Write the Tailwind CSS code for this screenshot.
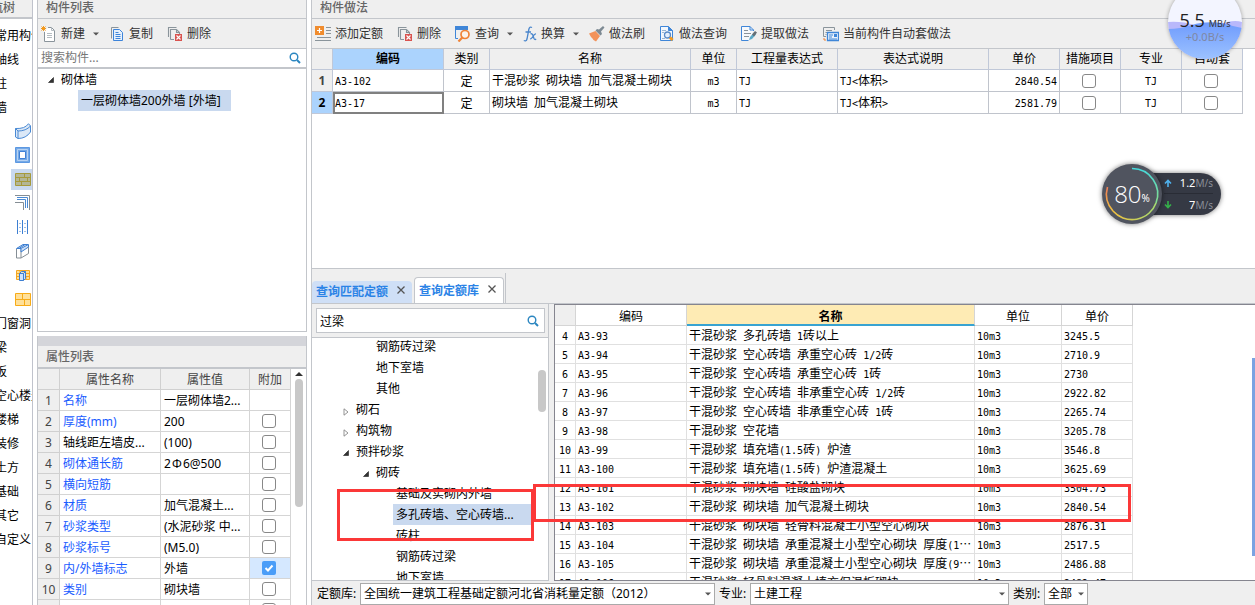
<!DOCTYPE html>
<html lang="zh-CN">
<head>
<meta charset="utf-8">
<title>构件做法</title>
<script src="https://cdn.jsdelivr.net/npm/@tailwindcss/browser@4"></script>
</head>
<body class="relative flex h-screen overflow-hidden bg-white font-['Noto_Sans','Noto_Sans_CJK_SC',sans-serif] text-xs leading-4 text-black">

<!-- shared icons -->
<svg class="hidden">
  <symbol id="search" viewBox="0 0 12 12"><circle cx="5" cy="5" r="3.8" fill="none" stroke="#2b86c0" stroke-width="1.4"/><path d="M8 8l3 3" stroke="#2b86c0" stroke-width="2"/></symbol>
  <symbol id="caret" viewBox="0 0 6 4"><path d="M0 .5h6L3 3.5z" fill="#555"/></symbol>
  <symbol id="open" viewBox="0 0 8 8"><path d="M6.500 1.500v5h-5z" fill="#333" stroke="#222" stroke-width=".6"/></symbol>
  <symbol id="closed" viewBox="0 0 8 8"><path d="M2 .8v6.4L6 4z" fill="#fff" stroke="#888" stroke-width=".9"/></symbol>
  <symbol id="close" viewBox="0 0 8 8"><path d="M.5.5l7 7M7.500.5l-7 7" stroke="#555" stroke-width="1.3"/></symbol>
  <symbol id="delete" viewBox="0 0 16 16"><path d="M1.500 11V1.500H9.500M3.500 13.500V3.500h6l3 3V8M9.500 3.500v3h3M3.500 13.500H7" fill="none" stroke="#8a949b" stroke-width="1.1"/><path d="M8 8h7v7H8z" fill="#d9534f"/><path d="M9.500 9.500l4 4m0-4l-4 4" stroke="#fff" stroke-width="1.1"/></symbol>
</svg>

<nav aria-label="导航树" class="flex w-[33px] shrink-0 flex-col overflow-hidden border-r border-[#c0c3cc] whitespace-nowrap">
  <h2 class="h-[19px] shrink-0 border-b-2 border-[#c3c6cb] bg-[#efefef] text-[#666]"><span class="-ml-[21px] font-medium">导航树</span></h2>
  <ul class="mt-1 flex flex-col *:flex *:h-6 *:shrink-0 *:items-center">
    <li><a href="#" class="-ml-[5px] pt-0.5">常用构件类型</a></li>
    <li><a href="#" class="-ml-[5px] pt-0.5">轴线</a></li>
    <li><a href="#" class="-ml-[5px] pt-0.5">柱</a></li>
    <li><a href="#" class="-ml-[5px] pt-0.5">墙</a></li>
    <li><a href="#" aria-label="弧形墙" class="ml-[11px] flex h-[21px] w-[21px] items-center justify-end pr-px"><svg class="size-4" viewBox="0 0 16 16" fill="#dbe8f7" stroke="#4a8ad4"><path d="M.5 5.500Q10 6 13.500.7L15.500 3v6Q11 15.500 3 15.500L.5 14z"/><path d="M.5 5.500L3 8Q11 8 15.500 3M3 8v7.500" fill="none"/></svg></a></li>
    <li><a href="#" aria-label="洞口" class="ml-[11px] flex h-[21px] w-[21px] items-center justify-end pr-px"><svg class="size-4" viewBox="0 0 16 16"><path d="M.5.5h14v15H.5z" fill="#75a9e6" stroke="#5c98e2"/><path d="M2.500 2.500h10v11h-10z" fill="none" stroke="#b7d2f3"/><path d="M4.500 4.500h6v7h-6z" fill="#fff" stroke="#3f80d6"/></svg></a></li>
    <li><a href="#" aria-label="砌体墙" class="ml-[11px] flex h-[21px] w-[21px] items-center justify-end bg-[#c9d9ef] pr-px"><svg class="size-4" viewBox="0 0 16 16"><path d="M.5 2.500h15v12H.5zM.5 6.500h15M.5 10.500h15M9.500 2.500v4M4.500 6.500v4M12.500 6.500v4M6.500 10.500v4" fill="#b3b696" stroke="#a69a3c"/></svg></a></li>
    <li><a href="#" aria-label="墙角" class="ml-[11px] flex h-[21px] w-[21px] items-center justify-end pr-px"><svg class="size-4" viewBox="0 0 16 16" fill="none"><path d="M0 .5h14.500V15M0 7.500h8.500V15" stroke="#858e95"/><path d="M2 2.500h10.500V13M2 4.500h8.500V13" stroke="#4a8ad4"/></svg></a></li>
    <li><a href="#" aria-label="墙筋" class="ml-[11px] flex h-[21px] w-[21px] items-center justify-end pr-px"><svg class="size-4" viewBox="0 0 16 16" fill="none" stroke="#3d7fd2"><path d="M2.500 1v14M7.500 1v14M12.500 1v14"/><path d="M2 4.500h11M2 8.500h11M2 12.500h11" stroke-dasharray="1 1.500"/></svg></a></li>
    <li><a href="#" aria-label="暗梁" class="ml-[11px] flex h-[21px] w-[21px] items-center justify-end pr-px"><svg class="size-4" viewBox="0 0 16 16"><path d="M1.500 6v9H6V6M6 15l7.500-4.500V2" fill="#fff" stroke="#858e95"/><path d="M1.500 5.500L8 1.500h5.500L6 5.500zM4 5.500l6-4M6 6v3l7.500-5V2" fill="#cfe0f6" stroke="#3d7fd2"/></svg></a></li>
    <li><a href="#" aria-label="幕墙" class="ml-[11px] flex h-[21px] w-[21px] items-center justify-end pr-px"><svg class="size-4" viewBox="0 0 16 16"><path d="M1.500 3.500h13v9h-13zM1.500 6.500h13M1.500 9.500h13M5 3.500v3M11 9.500v3" fill="#ffdf94" stroke="#f5a623"/><path d="M4.500 6.500l2-2h4v7l-2 2h-4zM8.500 6.500v7M4.500 6.500h4l2-2" fill="#cfe3fa" stroke="#3d7fd2"/></svg></a></li>
    <li><a href="#" aria-label="砖墙" class="ml-[11px] flex h-[21px] w-[21px] items-center justify-end pr-px"><svg class="size-4" viewBox="0 0 16 16"><path d="M.5 2.500h15v12H.5zM.5 8.500h15M7.500 2.500v6M9.500 8.500v6" fill="#ffe099" stroke="#f7ab18"/></svg></a></li>
    <li><a href="#" class="-ml-[5px] pt-0.5">门窗洞</a></li>
    <li><a href="#" class="-ml-[5px] pt-0.5">梁</a></li>
    <li><a href="#" class="-ml-[5px] pt-0.5">板</a></li>
    <li><a href="#" class="-ml-[5px] pt-0.5">空心楼盖</a></li>
    <li><a href="#" class="-ml-[5px] pt-0.5">楼梯</a></li>
    <li><a href="#" class="-ml-[5px] pt-0.5">装修</a></li>
    <li><a href="#" class="-ml-[5px] pt-0.5">土方</a></li>
    <li><a href="#" class="-ml-[5px] pt-0.5">基础</a></li>
    <li><a href="#" class="-ml-[5px] pt-0.5">其它</a></li>
    <li><a href="#" class="-ml-[5px] pt-0.5">自定义</a></li>
  </ul>
</nav>

<div class="ml-1 flex w-[270px] shrink-0 flex-col gap-1">
  <section class="flex h-[332px] shrink-0 flex-col border-x border-b border-[#c3c6cb]">
    <h2 class="h-[19px] shrink-0 border-b border-[#c3c6cb] bg-[#efefef] pl-2 font-medium text-[#666]">构件列表</h2>
    <div class="flex h-[30px] shrink-0 items-center gap-3.5 border-b border-[#c3c6cb] bg-[#efefef] px-[3px] text-[#333]">
      <button class="flex items-center gap-1"><svg class="size-4" viewBox="0 0 16 16"><path d="M3.500 6v9.500h10v-11l-3-3H7" fill="#fff" stroke="#8a949b"/><path d="M10.500 1.500v3h3M6 7.500h5M6 9.500h5M6 11.500h5" fill="none" stroke="#b5bcc1"/><path d="M2.500 0v5M0 2.500h5M.5.5l4 4m0-4l-4 4" stroke="#f39a1f"/></svg>新建<svg class="-mr-0.5 ml-1 h-1 w-1.5"><use href="#caret"/></svg></button>
      <button class="flex items-center gap-1"><svg class="h-4 w-3.5" viewBox="0 0 14 16"><path d="M.5 12.500V1.500h7" fill="none" stroke="#8a949b"/><path d="M2.500 3.500h6l3 3v8h-9z" fill="#e5f0fc" stroke="#3d84da"/><path d="M4.500 6.500h3M4.500 8.500h5M4.500 10.500h5M4.500 12.500h5" stroke="#3d84da"/></svg>复制</button>
      <button class="flex items-center gap-1"><svg class="size-4"><use href="#delete"/></svg>删除</button>
    </div>
    <div class="flex h-5 shrink-0 items-center border-b-2 border-[#c3c6cb] pr-[5px] pl-[3px]">
      <input type="search" aria-label="搜索构件" placeholder="搜索构件..." class="h-4 min-w-0 flex-1 outline-none placeholder:text-[#777]">
      <button aria-label="搜索"><svg class="size-3"><use href="#search"/></svg></button>
    </div>
    <ul role="tree" class="min-h-0 flex-1">
      <li role="treeitem" class="flex h-[21px] items-center gap-1.5 pl-[9px]"><svg class="size-2"><use href="#open"/></svg>砌体墙</li>
      <li role="treeitem" aria-selected="true" class="ml-10 flex h-[21px] w-[153px] items-center bg-[#c9d9ef] pl-[3px] whitespace-nowrap">一层砌体墙200外墙 [外墙]</li>
    </ul>
  </section>

  <section class="flex min-h-0 flex-1 flex-col overflow-hidden border-x border-[#c3c6cb]">
    <h2 class="h-[33px] shrink-0 border-t-10 border-b-2 border-t-[#d4d5da] border-b-[#c3c6cb] bg-[#efefef] pt-[3px] pl-2 font-medium text-[#666]">属性列表</h2>
    <div class="flex min-h-0 flex-1 overflow-hidden">
      <table class="w-[253px] table-fixed border-separate border-spacing-0 self-start [&_td]:border-r [&_td]:border-b [&_td]:border-[#d5d5d5] [&_td]:p-0 [&_td]:pt-0.5 [&_td]:pl-[3px] [&_th]:border-r [&_th]:border-b [&_th]:border-[#d0d0d0] [&_th]:bg-[#efefef] [&_th]:p-0 [&_th]:pt-0.5 [&_th]:font-normal [&_th]:text-[#444] [&_tr]:h-[21px]">
        <colgroup><col class="w-[22px]"><col class="w-[101px]"><col class="w-[89px]"><col class="w-[41px]"></colgroup>
        <thead><tr><th></th><th scope="col">属性名称</th><th scope="col">属性值</th><th scope="col">附加</th></tr></thead>
        <tbody id="props" class="whitespace-nowrap"></tbody>
      </table>
      <div class="flex flex-1 flex-col items-center pt-0.5">
        <svg class="h-1.5 w-2.5" viewBox="0 0 10 6"><path d="M1 5h8L5 1z" fill="#333"/></svg>
        <div class="mt-0.5 h-32 w-2 rounded-full bg-[#c8c8c8]"></div>
      </div>
    </div>
  </section>
</div>

<main class="ml-1 flex min-w-0 flex-1 flex-col border-l border-[#c3c6cb]">
  <section class="flex h-[269px] shrink-0 flex-col border-b border-[#c3c6cb]">
    <h2 class="h-[19px] shrink-0 border-b border-[#c3c6cb] bg-[#efefef] pl-2 font-medium text-[#666]">构件做法</h2>
    <div class="flex h-[30px] shrink-0 items-center gap-3.5 border-b border-[#c3c6cb] bg-[#efefef] px-[3px] whitespace-nowrap text-[#333]">
      <button class="flex items-center gap-1"><svg class="size-4" viewBox="0 0 16 16"><path d="M0 0h9v9H0z" fill="#f08c2e"/><path d="M2 4.500h5M4.500 2v5" stroke="#fff" stroke-width="1.200"/><path d="M11 1.500h5M11 4.500h5M11 7.500h5M2 11.500h14M0 14.500h16" stroke="#8a949b"/></svg>添加定额</button>
      <button class="flex items-center gap-1"><svg class="size-4"><use href="#delete"/></svg>删除</button>
      <button class="flex items-center gap-1"><svg class="size-4" viewBox="0 0 16 16"><path d="M0 0h13v4H0z" fill="#3f86d8"/><path d="M.5 4v8.500H3" fill="none" stroke="#3f86d8"/><circle cx="10" cy="8.500" r="4" fill="#fbf3ea" stroke="#f08336" stroke-width="1.700"/><path d="M7.300 11.500L3.500 15.500" stroke="#f08336" stroke-width="2.200"/></svg>查询<svg class="-mr-1 ml-1 h-1 w-1.5"><use href="#caret"/></svg></button>
      <button class="flex items-center gap-1"><svg class="h-4 w-3.5" viewBox="0 0 14 16" fill="none" stroke="#4a86cc" stroke-width="1.300"><path d="M9 1.500Q6.500 0 5.800 3.500L4 13Q3.200 15.800.8 14.500M2.500 6h5.500"/><path d="M7.500 8q1.500-.8 2.300 1l1.200 3.500q.6 1.500 2.200.7M13 7.800q-1.500-.2-2.700 2.200t-3 3.200"/></svg>换算<svg class="-mr-1 ml-1 h-1 w-1.5"><use href="#caret"/></svg></button>
      <button class="flex items-center gap-1"><svg class="size-4" viewBox="0 0 16 16"><path d="M0 7.500L6.500 5l4.500 5-4 5.500L4.500 14l-1-1.500-1.500-1.500z" fill="#f2925a"/><path d="M6.500 4.500L8 3l2 .5L14 0l1.500 1.500L12 5.500l1 2.500-1.500 1.500z" fill="#7d8a93"/></svg>做法刷</button>
      <button class="flex items-center gap-1"><svg class="size-4" viewBox="0 0 16 16"><path d="M1.500.5h8l4 4v10h-12z" fill="#f2f7fd" stroke="#3f86d8"/><path d="M9.500.5v4h4" fill="#3f86d8" stroke="#3f86d8"/><path d="M3 4.500h4M3 6.500h2M3 12.500h3" stroke="#9db7d3"/><circle cx="8.500" cy="9" r="3" fill="#e5effb" stroke="#5b8cc8" stroke-width="1.300"/><path d="M11 11.500l2.500 2.500" stroke="#f39a1f" stroke-width="3"/></svg>做法查询</button>
      <button class="flex items-center gap-1"><svg class="size-4" viewBox="0 0 16 16"><path d="M12.500 5v-1l-3.500-3.500H.5v14h7" fill="#f6f9fc" stroke="#3f86d8"/><path d="M9 .5v3.500h3.500" fill="none" stroke="#3f86d8"/><path d="M3 4.500h4M3 7.500h7M3 10.500h5" stroke="#8a949b"/><path d="M8 14l1-3 4-4.500 2 2-4 4.500z" fill="#5aa9c8"/><path d="M11 8.500l3-3.500 2 1.500-3 4z" fill="#666f75"/></svg>提取做法</button>
      <button class="flex items-center gap-1"><svg class="size-4" viewBox="0 0 16 16" fill="none"><path d="M3 10.500H.5v-9h11V4M3 4.500h6M2.500 6.500h2M2.500 8.500h1" stroke="#8a949b"/><path d="M4.500 6.500h11v8h-11z" fill="#eaf2fc" stroke="#3f86d8" stroke-width="1.300"/><path d="M6 9h4M6 11h3M6 13h8" stroke="#3f86d8"/><path d="M11 8h3v3h-3z" fill="#3f86d8"/><path d="M1 12v2h2" stroke="#f08336"/></svg>当前构件自动套做法</button>
    </div>
    <table class="w-[931px] table-fixed border-separate border-spacing-0 [&_td]:border-r [&_td]:border-b [&_td]:border-[#c0c4cc] [&_td]:p-0 [&_th]:border-r [&_th]:border-b [&_th]:border-[#c0c8d8] [&_th]:p-0">
      <colgroup><col class="w-[21px]"><col class="w-[111px]"><col class="w-[46px]"><col class="w-[201px]"><col class="w-[46px]"><col class="w-[101px]"><col class="w-[151px]"><col class="w-[71px]"><col class="w-[61px]"><col class="w-[61px]"><col class="w-[61px]"></colgroup>
      <thead><tr class="h-[21px] bg-[#efefef] *:font-normal"><th></th><th scope="col" class="bg-[#abd3fd] font-bold!">编码</th><th scope="col">类别</th><th scope="col">名称</th><th scope="col">单位</th><th scope="col">工程量表达式</th><th scope="col">表达式说明</th><th scope="col">单价</th><th scope="col">措施项目</th><th scope="col">专业</th><th scope="col">自动套</th></tr></thead>
      <tbody id="methods" class="font-['Noto_Sans_CJK_SC',sans-serif] whitespace-nowrap"></tbody>
    </table>
  </section>

  <section class="flex min-h-0 flex-1 flex-col bg-[#efefef]">
    <div role="tablist" class="flex h-[35px] shrink-0 items-end gap-0.5 border-b border-[#c3c6cb] font-bold text-[#2b83e6]">
      <div class="flex h-[22px] items-center rounded-t-sm bg-[#cfdff6] pr-[7px] pl-1"><button role="tab" aria-selected="false">查询匹配定额</button><button aria-label="关闭查询匹配定额" class="mb-1 ml-[9px]"><svg class="size-2"><use href="#close"/></svg></button></div>
      <div class="flex h-[26px] items-center rounded-t-sm border border-b-0 border-[#c3c6cb] bg-white pr-[7px] pl-1"><button role="tab" aria-selected="true">查询定额库</button><button aria-label="关闭查询定额库" class="mb-1 ml-[9px]"><svg class="size-2"><use href="#close"/></svg></button></div>
      <div class="-ml-px h-[30px] border-l border-[#c3c6cb]"></div>
    </div>

    <div class="flex min-h-0 flex-1 gap-[5px]">
      <div class="flex w-[237px] shrink-0 flex-col border-r border-b border-[#c3c6cb]">
        <div class="flex h-[34px] shrink-0 items-center border-b border-[#c3c6cb] pr-[3px] pl-1">
          <div class="flex h-[25px] flex-1 items-center border border-[#c3c6cb] bg-white pr-[5px] pl-[3px]">
            <input type="search" aria-label="搜索定额" value="过梁" class="h-5 min-w-0 flex-1 outline-none">
            <button aria-label="搜索"><svg class="size-3"><use href="#search"/></svg></button>
          </div>
        </div>
        <div class="flex min-h-0 flex-1 overflow-hidden bg-white">
          <ul role="tree" class="-mt-0.5 flex flex-1 flex-col whitespace-nowrap *:flex *:h-[21px] *:shrink-0 *:items-center *:gap-1.5">
            <li role="treeitem" class="pl-16">钢筋砖过梁</li>
            <li role="treeitem" class="pl-16">地下室墙</li>
            <li role="treeitem" class="pl-16">其他</li>
            <li role="treeitem" class="pl-[30px]"><svg class="mt-1 size-2"><use href="#closed"/></svg>砌石</li>
            <li role="treeitem" class="pl-[30px]"><svg class="mt-1 size-2"><use href="#closed"/></svg>构筑物</li>
            <li role="treeitem" class="pl-[30px]"><svg class="mt-0.5 size-2"><use href="#open"/></svg>预拌砂浆</li>
            <li role="treeitem" class="pl-[50px]"><svg class="mt-0.5 size-2"><use href="#open"/></svg>砌砖</li>
            <li role="treeitem" class="pl-[84px]">基础及实砌内外墙</li>
            <li role="treeitem" aria-selected="true" class="ml-[81px] bg-[#c9d9ef] pl-[3px]">多孔砖墙、空心砖墙...</li>
            <li role="treeitem" class="pl-[84px]">砖柱</li>
            <li role="treeitem" class="pl-[84px]">钢筋砖过梁</li>
            <li role="treeitem" class="pl-[84px]">地下室墙</li>
          </ul>
          <div class="flex w-4 justify-end pt-8 pr-0.5"><div class="h-[42px] w-2 rounded-full bg-[#c8c8c8]"></div></div>
        </div>
      </div>

      <div class="min-w-0 flex-1 overflow-hidden border-y border-l border-[#85858f] bg-white">
        <table class="w-[578px] table-fixed border-separate border-spacing-0 font-['Noto_Sans_CJK_SC',sans-serif] leading-[14px] [&_td]:border-r [&_td]:border-b [&_td]:border-[#e0e0e0] [&_td]:p-0 [&_td]:pt-0.5 [&_th]:border-r [&_th]:border-b [&_th]:border-[#d5d5d5] [&_th]:p-0 [&_th]:pt-0.5">
          <colgroup><col class="w-[21px]"><col class="w-[111px]"><col class="w-[288px]"><col class="w-[87px]"><col class="w-[71px]"></colgroup>
          <thead><tr class="h-[21px] *:font-normal"><th class="bg-[#efefef]"></th><th scope="col">编码</th><th scope="col" class="border-b-2! border-b-[#38a3d1]! bg-[#feebb4] font-bold!">名称</th><th scope="col">单位</th><th scope="col">单价</th></tr></thead>
          <tbody id="quotas" class="whitespace-nowrap"></tbody>
        </table>
      </div>
    </div>

    <form class="flex h-6 shrink-0 items-center pt-px pl-[5px] whitespace-nowrap">
      <label for="lib" class="w-[43px]">定额库:</label>
      <span class="grid w-[355px] items-center"><select id="lib" class="col-start-1 row-start-1 h-[22px] appearance-none border border-[#aaa] bg-white pl-[3px]"><option>全国统一建筑工程基础定额河北省消耗量定额（2012）</option></select><svg class="pointer-events-none col-start-1 row-start-1 mr-1 h-1 w-1.5 justify-self-end"><use href="#caret"/></svg></span>
      <label for="major" class="ml-1 w-[31px]">专业:</label>
      <span class="grid w-[259px] items-center"><select id="major" class="col-start-1 row-start-1 h-[22px] appearance-none border border-[#aaa] bg-white pl-[3px]"><option>土建工程</option></select><svg class="pointer-events-none col-start-1 row-start-1 mr-1 h-1 w-1.5 justify-self-end"><use href="#caret"/></svg></span>
      <label for="kind" class="ml-1 w-[31px]">类别:</label>
      <span class="grid w-11 items-center"><select id="kind" class="col-start-1 row-start-1 h-[22px] appearance-none border border-[#aaa] bg-white pl-[3px]"><option>全部</option></select><svg class="pointer-events-none col-start-1 row-start-1 mr-1 h-1 w-1.5 justify-self-end"><use href="#caret"/></svg></span>
    </form>
  </section>
</main>

<!-- annotation frames -->
<div class="pointer-events-none absolute top-[489px] left-[337px] h-[52px] w-[197px] border-3 border-[#fb3838]"></div>
<div class="pointer-events-none absolute top-[484px] left-[533px] h-[38px] w-[598px] border-3 border-[#fb3838]"></div>
<div class="absolute top-[358px] right-0 h-[198px] w-[3px] bg-[#7ba3e2]"></div>

<!-- network speed ball -->
<div class="absolute -top-[15px] left-[1168px] size-[74px] overflow-hidden rounded-full bg-[#f3f5ff] shadow-[0_0_4px_#0005]">
  <svg class="absolute inset-0" viewBox="0 0 74 74"><defs><linearGradient id="water" x2="0" y2="1"><stop stop-color="#6f9bfd"/><stop offset="1" stop-color="#9cc2ff"/></linearGradient></defs><path d="M0 37q14-1 26 3t26-1 22-2v37H0z" fill="#b9b8fb"/><path d="M0 44q12 0 24-4t30-2q10 3 20 5v31H0z" fill="url(#water)"/></svg>
  <div class="relative flex items-baseline justify-center gap-1 pt-6 leading-[22px]"><span class="font-['Open_Sans',sans-serif] text-lg leading-[22px] text-[#222]">5.5</span><span class="text-[9px] text-[#333]">MB/s</span></div>
  <div class="relative -mt-1 text-center text-[11px] leading-3 text-[#7f87a3]">+0.0B/s</div>
</div>

<!-- memory ball with up / down rates -->
<div class="absolute top-[164px] left-[1102px] flex items-center">
  <div class="relative z-10 flex size-[60px] items-center justify-center rounded-full bg-[#50545f] shadow-[0_0_5px_#0008]">
    <svg class="absolute inset-0" viewBox="0 0 60 60" fill="none" stroke-width="1.600"><defs><linearGradient id="ga" x2="0" y2="1"><stop stop-color="#45d9dc"/><stop offset="1" stop-color="#86dc8a"/></linearGradient><linearGradient id="gb"><stop stop-color="#f0c040"/><stop offset="1" stop-color="#a5dc70"/></linearGradient><linearGradient id="gc" x2="0" y2="1"><stop stop-color="#ee7d58"/><stop offset="1" stop-color="#f0c040"/></linearGradient></defs><path d="M30 4.500A25.500 25.500 0 0 1 54 39" stroke="url(#ga)"/><path d="M54 39A25.500 25.500 0 0 1 11 47" stroke="url(#gb)"/><path d="M11 47A25.500 25.500 0 0 1 5.500 23" stroke="url(#gc)"/></svg>
    <span class="font-['Open_Sans',sans-serif] text-2xl font-light text-white">80</span><span class="mt-2 text-[10px] text-white">%</span>
  </div>
  <div class="-ml-[22px] flex h-[42px] w-[81px] flex-col rounded-r-full bg-[#353944] pr-2 pl-6 text-[11px] text-white shadow-[0_0_5px_#0008] *:flex *:h-[21px] *:items-center">
    <div class="border-b border-[#292c35]"><svg class="mr-auto size-2" viewBox="0 0 8 8"><path d="M4 8V1.500M1 4.500l3-3 3 3" fill="none" stroke="#4fb2ee" stroke-width="1.600"/></svg>1.2<span class="text-[10px] text-[#8b8f98]">M/s</span></div>
    <div><svg class="mr-auto size-2" viewBox="0 0 8 8"><path d="M4 0v6.500M1 3.500l3 3 3-3" fill="none" stroke="#35b24a" stroke-width="1.600"/></svg>7<span class="text-[10px] text-[#8b8f98]">M/s</span></div>
  </div>
</div>

<script>
// Half-width characters are set in a 6px monospaced cell beside 12px ideographs.
const mono = s => String(s).replace(/[\x20-\x7e]+/g, m => `<span class="font-['DejaVu_Sans_Mono',monospace] text-[10px] whitespace-pre">${m.replace(/</g, '&lt;').replace(/>/g, '&gt;')}</span>`);
const box = label => `<input type="checkbox" aria-label="${label}" class="mx-auto block size-3.5 appearance-none rounded-[3px] border border-[#888] bg-white">`;
const ticked = label => `<span class="grid justify-center"><input type="checkbox" checked aria-label="${label}" class="col-start-1 row-start-1 size-3.5 appearance-none rounded-[2px] bg-[#4a9df8]"><svg class="pointer-events-none col-start-1 row-start-1 size-3.5" viewBox="0 0 14 14"><path d="M3.500 7l2.500 2.500L10.500 4.500" fill="none" stroke="#fff" stroke-width="2"/></svg></span>`;

const props = [
  ['名称', '一层砌体墙2...'], ['厚度(mm)', '200'], ['轴线距左墙皮...', '(100)'],
  ['砌体通长筋', '2<span class="inline-block w-3 text-center">Ф</span>6@500'], ['横向短筋', ''], ['材质', '加气混凝土...'],
  ['砂浆类型', '(水泥砂浆 中...'], ['砂浆标号', '(M5.0)'], ['内/外墙标志', '外墙'], ['类别', '砌块墙'], ['', '']
];
document.getElementById('props').innerHTML = props.map(([n, v], i) =>
  `<tr><th>${i < 10 ? i + 1 : ''}</th><td class="${i === 2 ? 'text-black' : 'text-[#1a5cff]'}">${n}</td><td>${v}</td><td class="${i === 8 ? 'bg-[#d5e8ff]' : ''} pt-0! pr-0.5! pl-0!">${i === 0 ? '' : i === 8 ? ticked(n) : box(n || '附加')}</td></tr>`).join('');

const methods = [
  ['A3-102', '干混砂浆 砌块墙 加气混凝土砌块', '2840.54'],
  ['A3-17', '砌块墙 加气混凝土砌块', '2581.79']
];
document.getElementById('methods').innerHTML = methods.map(([c, n, p], i) =>
  `<tr class="h-[22px]"><th class="font-['Noto_Sans',sans-serif] ${i ? 'bg-[#abd3fd]' : 'bg-[#efefef] text-[#444]'}">${i + 1}</th>
  <td class="pl-0.5! ${i ? 'outline-2 -outline-offset-2 outline-[#808080]' : ''}">${mono(c)}</td><td class="text-center">定</td><td class="pl-0.5!">${mono(n)}</td><td class="text-center">${mono('m3')}</td><td class="pl-0.5!">${mono('TJ')}</td><td class="pl-0.5!">${mono('TJ<体积>')}</td><td class="pr-0.5! text-right">${mono(p)}</td><td class="pr-0.5!">${box('措施项目')}</td><td class="text-center">${mono('TJ')}</td><td class="pr-0.5!">${box('自动套')}</td></tr>`).join('');

const quotas = [
  ['多孔砖墙 1砖以上', '3245.5'], ['空心砖墙 承重空心砖 1/2砖', '2710.9'], ['空心砖墙 承重空心砖 1砖', '2730'],
  ['空心砖墙 非承重空心砖 1/2砖', '2922.82'], ['空心砖墙 非承重空心砖 1砖', '2265.74'], ['空花墙', '3205.78'],
  ['填充墙(1.5砖) 炉渣', '3546.8'], ['填充墙(1.5砖) 炉渣混凝土', '3625.69'], ['砌块墙 硅酸盐砌块', '3504.73'],
  ['砌块墙 加气混凝土砌块', '2840.54'], ['砌块墙 轻骨料混凝土小型空心砌块', '2876.31'],
  ['砌块墙 承重混凝土小型空心砌块 厚度(1…', '2517.5'], ['砌块墙 承重混凝土小型空心砌块 厚度(9…', '2486.88'],
  ['轻骨料混凝土填充保温板砌块', '2482.47']
];
document.getElementById('quotas').innerHTML = quotas.map(([n, p], i) =>
  `<tr class="h-[19px]"><td class="text-center">${mono(i + 4)}</td><td class="pl-0.5!">${mono('A3-' + (i + 93))}</td><td class="pl-0.5!">${mono('干混砂浆 ' + n)}</td><td class="pl-0.5!">${mono('10m3')}</td><td class="pl-0.5!">${mono(p)}</td></tr>`).join('');
</script>
</body>
</html>
